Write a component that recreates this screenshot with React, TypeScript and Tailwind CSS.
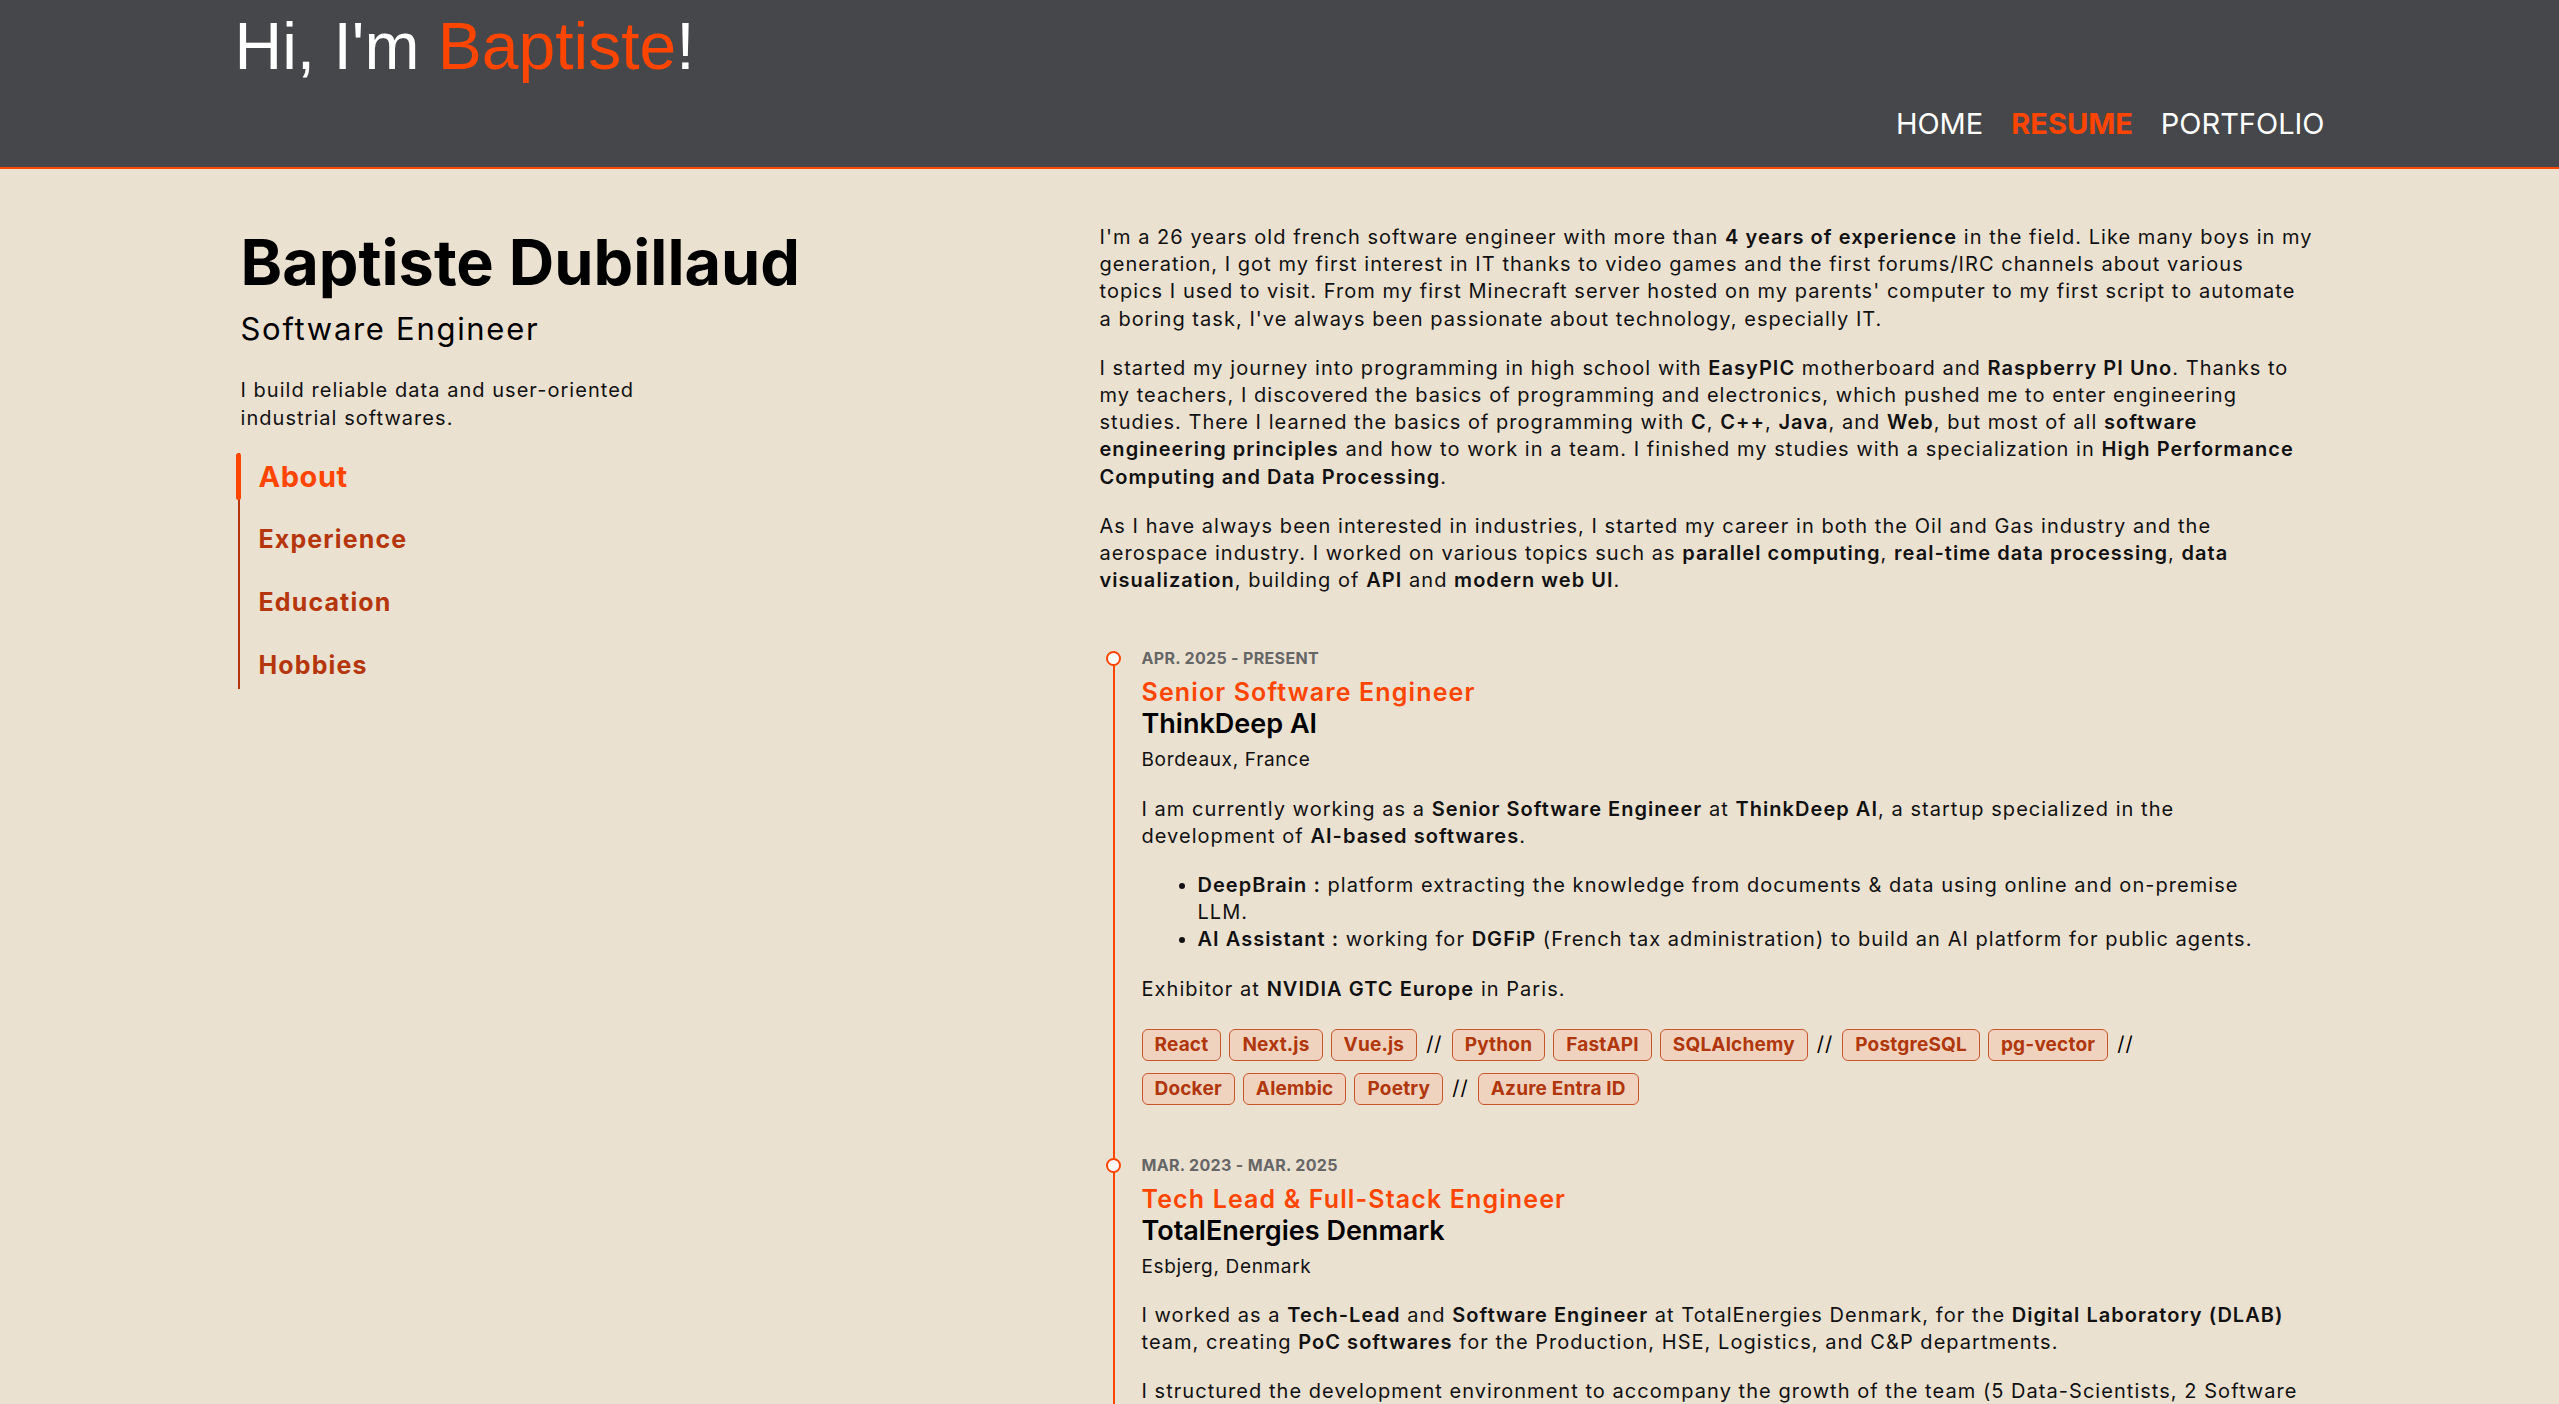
import React from "react";

const tagGroups1 = [
  ["React", "Next.js", "Vue.js"],
  ["Python", "FastAPI", "SQLAlchemy"],
  ["PostgreSQL", "pg-vector"],
  ["Docker", "Alembic", "Poetry"],
  ["Azure Entra ID"],
];

const tagGroups2 = [
  ["React", "TypeScript"],
  ["Python", "FastAPI", "Pandas"],
  ["PostgreSQL"],
  ["Docker", "Azure DevOps"],
];

const Tags = ({ groups }: { groups: string[][] }) => (
  <div className="flex flex-wrap gap-x-[8px] gap-y-[12px] mt-[26px]">
    {groups.map((group, i) => (
      <div key={i} className="flex items-center gap-[8px]">
        {group.map((tag) => (
          <span
            key={tag}
            className="inline-flex h-[32px] items-center px-[12px] rounded-[6px] border border-[#c9552c] bg-[#f0d3bf] text-[#b0360c] text-[19px] tracking-[0.01em] font-bold"
          >
            {tag}
          </span>
        ))}
        {i < groups.length - 1 && <span className="text-[20px] text-black px-[1px]">//</span>}
      </div>
    ))}
  </div>
);

const App = () => {
  return (
    <div className="h-screen overflow-y-auto bg-[#ebe1d1] text-[#111] font-['Inter',sans-serif] [&::-webkit-scrollbar]:w-[3px] [&::-webkit-scrollbar-track]:bg-transparent [&::-webkit-scrollbar-thumb]:bg-[#aaa49b]">
      {/* Header */}
      <header className="h-[169px] bg-[#46474b] border-b-2 border-[#ff4500]">
        <div className="mx-auto w-[2090px] h-full flex flex-col">
          <h1 className="font-['Liberation_Sans',Arial,sans-serif] text-[66px] leading-none pt-[13px] text-white">
            Hi, I'm <span className="text-[#ff4500]">Baptiste</span>!
          </h1>
          <nav className="mt-auto mb-[29px] flex justify-end gap-[28px] text-[29px] leading-none text-white">
            <a>HOME</a>
            <a className="font-bold text-[#ff4500]">RESUME</a>
            <a>PORTFOLIO</a>
          </nav>
        </div>
      </header>

      {/* Main */}
      <main className="mx-auto w-[2090px] flex pt-[55px] pb-[80px] pr-[3px]">
        {/* Left column */}
        <aside className="w-[865px] shrink-0 pt-[7px] pl-[6px]">
          <h2 className="text-[63px] font-bold leading-none text-black">Baptiste Dubillaud</h2>
          <p className="mt-[19px] text-[31px] leading-none tracking-[0.055em] text-black">Software Engineer</p>
          <p className="mt-[33px] max-w-[440px] text-[20px] leading-[27.7px] tracking-[0.052em]">
            I build reliable data and user-oriented industrial softwares.
          </p>
          <nav className="mt-[21px] -ml-[3px] flex flex-col gap-[16px] border-l-2 border-[#b5360c] pl-[19px] font-bold">
            <a className="relative text-[29px] leading-[47px] tracking-[0.02em] text-[#ff4500]">
              <span className="absolute -left-[23px] top-0 h-full w-[5px] rounded-full bg-[#ff4500]" />
              About
            </a>
            <a className="text-[25px] leading-[47px] tracking-[0.045em] text-[#b5360c]">Experience</a>
            <a className="text-[25px] leading-[47px] tracking-[0.045em] text-[#b5360c]">Education</a>
            <a className="text-[25px] leading-[47px] tracking-[0.045em] text-[#b5360c]">Hobbies</a>
          </nav>
        </aside>

        {/* Right column */}
        <section className="flex-1 text-[20px] leading-[27.2px] tracking-[0.052em]">
          <div className="pr-[8px]">
            <p>
              I'm a 26 years old french software engineer with more than <b className="font-semibold">4 years of experience</b> in
              the field. Like many boys in my generation, I got my first interest in IT thanks to video games and the first
              forums/IRC channels about various topics I used to visit. From my first Minecraft server hosted on my parents'
              computer to my first script to automate a boring task, I've always been passionate about technology, especially IT.
            </p>
            <p className="mt-[22px]">
              I started my journey into programming in high school with <b className="font-semibold">EasyPIC</b> motherboard and{" "}
              <b className="font-semibold">Raspberry PI Uno</b>. Thanks to my teachers, I discovered the basics of programming and
              electronics, which pushed me to enter engineering studies. There I learned the basics of programming with{" "}
              <b className="font-semibold">C</b>, <b className="font-semibold">C++</b>, <b className="font-semibold">Java</b>, and{" "}
              <b className="font-semibold">Web</b>, but most of all <b className="font-semibold">software engineering principles</b>{" "}
              and how to work in a team. I finished my studies with a specialization in{" "}
              <b className="font-semibold">High Performance Computing and Data Processing</b>.
            </p>
            <p className="mt-[22px]">
              As I have always been interested in industries, I started my career in both the Oil and Gas industry and the
              aerospace industry. I worked on various topics such as <b className="font-semibold">parallel computing</b>,{" "}
              <b className="font-semibold">real-time data processing</b>, <b className="font-semibold">data visualization</b>,
              building of <b className="font-semibold">API</b> and <b className="font-semibold">modern web UI</b>.
            </p>
          </div>

          {/* Timeline */}
          <div className="mt-[57px] ml-[13px] border-l-2 border-[#ff4500]">
            {/* Entry 1 */}
            <div className="relative pl-[27px] pr-[20px] pb-[53px]">
              <span className="absolute -left-[8.5px] top-0 w-[15px] h-[15px] rounded-full border-2 border-[#ff4500] bg-white" />
              <p className="text-[16px] leading-[15px] tracking-[0.02em] font-bold text-[#666]">APR. 2025 - PRESENT</p>
              <h3 className="mt-[11px] text-[25px] leading-[31px] tracking-[0.045em] font-semibold text-[#ff4500]">
                Senior Software Engineer
              </h3>
              <h4 className="text-[27px] leading-[31px] tracking-normal font-semibold text-black">ThinkDeep AI</h4>
              <p className="mt-[7px] text-[19px] tracking-[0.035em]">Bordeaux, France</p>
              <p className="mt-[22px]">
                I am currently working as a <b className="font-semibold">Senior Software Engineer</b> at{" "}
                <b className="font-semibold">ThinkDeep AI</b>, a startup specialized in the development of{" "}
                <b className="font-semibold">AI-based softwares</b>.
              </p>
              <ul className="mt-[22px] list-disc pl-[56px] pr-[20px]">
                <li>
                  <b className="font-semibold">DeepBrain :</b> platform extracting the knowledge from documents &amp; data using
                  online and on-premise LLM.
                </li>
                <li>
                  <b className="font-semibold">AI Assistant :</b> working for <b className="font-semibold">DGFiP</b> (French tax
                  administration) to build an AI platform for public agents.
                </li>
              </ul>
              <p className="mt-[22px]">
                Exhibitor at <b className="font-semibold">NVIDIA GTC Europe</b> in Paris.
              </p>
              <Tags groups={tagGroups1} />
            </div>

            {/* Entry 2 */}
            <div className="relative pl-[27px] pr-[20px] pb-[20px]">
              <span className="absolute -left-[8.5px] top-0 w-[15px] h-[15px] rounded-full border-2 border-[#ff4500] bg-white" />
              <p className="text-[16px] leading-[15px] tracking-[0.02em] font-bold text-[#666]">MAR. 2023 - MAR. 2025</p>
              <h3 className="mt-[11px] text-[25px] leading-[31px] tracking-[0.045em] font-semibold text-[#ff4500]">
                Tech Lead &amp; Full-Stack Engineer
              </h3>
              <h4 className="text-[27px] leading-[31px] tracking-normal font-semibold text-black">TotalEnergies Denmark</h4>
              <p className="mt-[7px] text-[19px] tracking-[0.035em]">Esbjerg, Denmark</p>
              <p className="mt-[22px]">
                I worked as a <b className="font-semibold">Tech-Lead</b> and <b className="font-semibold">Software Engineer</b> at
                TotalEnergies Denmark, for the <b className="font-semibold">Digital Laboratory (DLAB)</b> team, creating{" "}
                <b className="font-semibold">PoC softwares</b> for the Production, HSE, Logistics, and C&amp;P departments.
              </p>
              <p className="mt-[22px]">
                I structured the development environment to accompany the growth of the team (5 Data-Scientists, 2 Software
                Engineers), setting up CI/CD pipelines, code reviews and deployments.
              </p>
              <Tags groups={tagGroups2} />
            </div>
          </div>
        </section>
      </main>
    </div>
  );
};

export default App;
